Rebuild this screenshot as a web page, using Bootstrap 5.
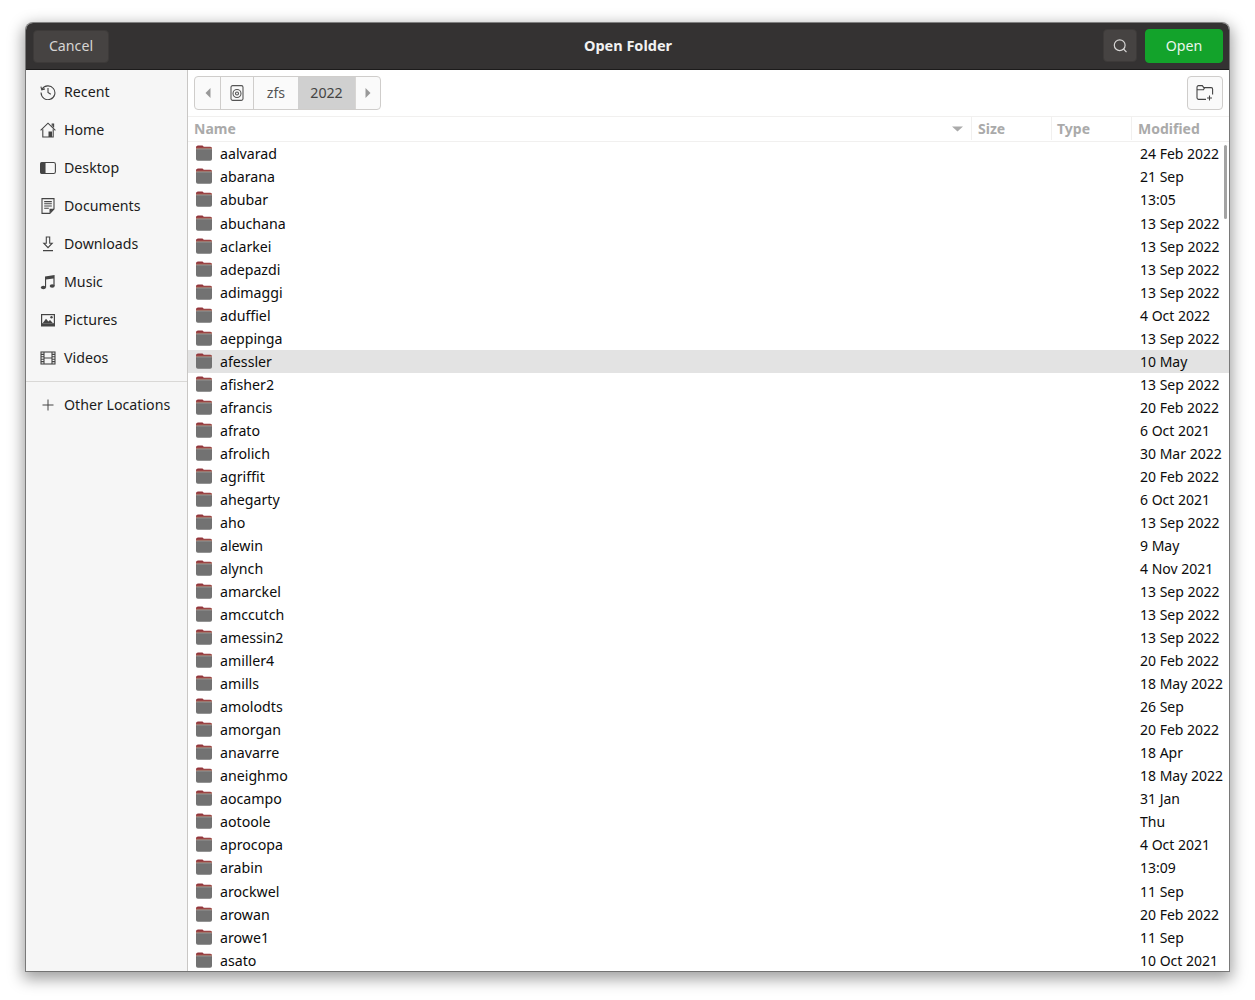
<!DOCTYPE html>
<html lang="en">
<head>
<meta charset="utf-8">
<title>Open Folder</title>
<link href="https://cdn.jsdelivr.net/npm/bootstrap@5.3.0/dist/css/bootstrap.min.css" rel="stylesheet">
<style>
html,body{background:#fff;height:1000px;overflow:hidden}
body{font-family:"Noto Sans","Liberation Sans",sans-serif;font-size:14.2px;color:#0c0c0c;padding:23px 26px 0}
.dlg{width:1203px;height:948px;border-radius:7px 7px 0 0;overflow:hidden;box-shadow:0 0 0 1px rgba(90,90,90,.7),0 5px 15px 3px rgba(0,0,0,.38);background:#fff}
.hdr{height:47px;background:#343232;border-bottom:1px solid #1c1b1b;display:grid;grid-template-columns:1fr auto 1fr;align-items:center;padding:0 6px 0 7px;flex:none}
.hdr-title{color:#f2f2f2;font-weight:700;font-size:14.5px}
.tbtn{background:#464342;color:#d6d5d4;border:1px solid #3d3a39;border-radius:4px;height:33px;padding:0;font-size:14.2px;display:flex;align-items:center;justify-content:center}
.tbtn-cancel{width:76px}
.tbtn-search{width:34px}
.tbtn-open{width:78px;height:34px;background:#13a32b;border-color:#13a32b;color:#e9f6eb}
.bodyrow{flex:1;min-height:0}
.side{width:162px;flex:none;background:#f6f6f6;border-right:1px solid #c9c7c5;color:#1c1c1c;padding-top:3px}
.sitem{height:38px;padding-left:14px;gap:8px}
.sitem svg{width:16px;height:16px;flex:none}
.sdiv{border-top:1px solid #d9d8d6;margin-top:4px;padding-top:4px}
.main{min-width:0;background:#fff}
.tools{height:47px;padding:6px 6px 0 6px;flex:none;border-bottom:1px solid #f1f0ef}
.crumbs{height:34px;border:1px solid #cfcdcb;border-radius:4px;background:#fafafa;color:#555;overflow:hidden}
.crumb{height:100%;display:flex;align-items:center;justify-content:center;border-right:1px solid #cfcdcb}
.crumb:last-child{border-right:0}
.c-prev{width:26px}.c-disk{width:33px}.c-zfs{width:44px;border-right:0}.c-yr{width:58px;background:#d0d0d0;color:#444;border-right:1px solid #d8d6d4}.c-next{width:24px}
.newf{width:36px;height:34px;border:1px solid #cfcdcb;border-radius:4px;background:#fafafa}
.cols{height:25px;padding-bottom:1px;border-bottom:1px solid #f1f0ef;color:#aaa;font-weight:700;font-size:14px;flex:none}
.col-name{width:784px;padding-left:6px;border-right:1px solid #f1f0ef;height:100%}
.col-size{width:80px;padding-left:6px;border-right:1px solid #f1f0ef;height:100%}
.col-type{width:80px;padding-left:5px;border-right:1px solid #f1f0ef;height:100%}
.col-mod{padding-left:6px;height:100%}
.lst{flex:1;min-height:0;overflow:hidden;position:relative}
.frow{height:23px;padding-left:8px}
.frow-tall{height:24px;padding-bottom:1px}
.frow-sel{background:#e3e3e3}
.fico{width:16px;height:16px;flex:none;margin-right:8px;position:relative;top:-1px}
.fname{flex:1;min-width:0}
.fdate{width:89px;flex:none;white-space:nowrap;font-size:14px}
.sbar{position:absolute;right:2px;top:3px;width:3px;height:74px;border-radius:2px;background:#a3a3a3}
</style>
</head>
<body>
<svg width="0" height="0" class="position-absolute">
<symbol id="fo" viewBox="0 0 16 16">
<path d="M2 .6h4.500l1.300 1.100H14.300C15.300 1.700 16 2.500 16 3.500V6H0V2.500C0 1.400.9.600 2 .6z" fill="#93363c"/>
<rect x="0" y="2.800" width="16" height="1" fill="#c2826b"/>
<rect x="0" y="3.700" width="16" height="12.100" rx="1.800" fill="#727272"/>
<rect x="0" y="3.700" width="16" height="1" fill="#8a8a8a"/>
</symbol>
</svg>
<div class="dlg d-flex flex-column">
  <div class="hdr">
    <div class="d-flex"><button class="tbtn tbtn-cancel" type="button">Cancel</button></div>
    <div class="hdr-title">Open Folder</div>
    <div class="d-flex justify-content-end gap-2">
      <button class="tbtn tbtn-search" type="button" aria-label="Search"><svg width="16" height="16" viewBox="0 0 16 16" fill="none" stroke="#d6d5d4" stroke-width="1.2"><circle cx="7.700" cy="7.200" r="5.400"/><path d="M11.500 11l3 3.200"/></svg></button>
      <button class="tbtn tbtn-open" type="button">Open</button>
    </div>
  </div>
  <div class="d-flex bodyrow">
    <div class="side">
      <div class="sitem d-flex align-items-center"><svg viewBox="0 0 16 16" fill="none" stroke="#444" stroke-width="1.1"><path d="M2.100 5.200A6.900 6.900 0 1 1 1.100 8.600"/><path d="M.9 2.600l.9 3.200 3.100-.9" /><path d="M8 4v4.400l2.800 1.800"/></svg><span>Recent</span></div>
      <div class="sitem d-flex align-items-center"><svg viewBox="0 0 16 16" fill="none" stroke="#444" stroke-width="1.1"><path d="M.6 8.400L8 1.200l7.400 7.200"/><path d="M12.200 4.600V2h1.400v3.600" /><path d="M2.800 7.200v7.800h10.400V7.200"/><rect x="8.500" y="9.500" width="3.500" height="5.500" fill="#444" stroke="none"/></svg><span>Home</span></div>
      <div class="sitem d-flex align-items-center"><svg viewBox="0 0 16 16" fill="none" stroke="#444" stroke-width="1.1"><rect x=".6" y="2.500" width="14.800" height="11" rx="1.800"/><path d="M.6 4.300c0-1 .8-1.800 1.800-1.800H5v11H2.400c-1 0-1.800-.8-1.800-1.800z" fill="#444"/></svg><span>Desktop</span></div>
      <div class="sitem d-flex align-items-center"><svg viewBox="0 0 16 16" fill="none" stroke="#444" stroke-width="1.100"><path d="M2 .6h12v10.400L9.800 15.400H2z"/><path d="M4.200 3.600h7.600M4.200 5.800h7.600M4.200 8h7.600M4.200 10.200h4.600"/><path d="M9.500 15v-4.200H14z" fill="#444" stroke="none"/></svg><span>Documents</span></div>
      <div class="sitem d-flex align-items-center"><svg viewBox="0 0 16 16" fill="none" stroke="#444" stroke-width="1.100"><path d="M6.300 1h3.400v6.200h2.500L8 11.600 3.800 7.200h2.500z"/><path d="M3 14.600h10"/></svg><span>Downloads</span></div>
      <div class="sitem d-flex align-items-center"><svg viewBox="0 0 16 16" fill="#444"><ellipse cx="3.400" cy="13.500" rx="2.500" ry="1.800"/><ellipse cx="12.200" cy="12" rx="2.500" ry="1.800"/><path d="M5 13.500V2.400L14.600 1v11h-1.200V4.400L6.100 5.400v8.100z"/></svg><span>Music</span></div>
      <div class="sitem d-flex align-items-center"><svg viewBox="0 0 16 16"><rect x="1" y="2" width="14" height="12.500" fill="#444"/><rect x="2.200" y="3.200" width="11.600" height="8" fill="#f6f6f6"/><path d="M2.800 11l3.200-4.200 2.400 2.600 1.600-1.400 2.800 3z" fill="#444"/><circle cx="11.500" cy="5.200" r="1.200" fill="#444"/></svg><span>Pictures</span></div>
      <div class="sitem d-flex align-items-center"><svg viewBox="0 0 16 16" fill="none" stroke="#444" stroke-width="1.100"><rect x="1" y="2" width="14" height="12"/><path d="M4 2v12M12 2v12M4 8h8"/><path d="M1 4.400h3M1 6.800h3M1 9.200h3M1 11.600h3M12 4.400h3M12 6.800h3M12 9.200h3M12 11.600h3"/></svg><span>Videos</span></div>
      <div class="sdiv"><div class="sitem d-flex align-items-center"><svg viewBox="0 0 16 16" fill="none" stroke="#444" stroke-width="1"><path d="M8 2.500v11M2.500 8h11"/></svg><span>Other Locations</span></div></div>
    </div>
    <div class="main flex-grow-1 d-flex flex-column">
      <div class="tools d-flex justify-content-between align-items-start">
        <div class="crumbs d-flex">
          <div class="crumb c-prev"><svg width="6" height="10" viewBox="0 0 6 10"><path d="M5.500 0v10L.5 5z" fill="#999"/></svg></div>
          <div class="crumb c-disk"><svg width="14" height="16" viewBox="0 0 14 16" fill="none" stroke="#555" stroke-width="1.100"><rect x="1" y=".6" width="12" height="14.800" rx="1.600"/><circle cx="7" cy="8.500" r="4"/><circle cx="7" cy="8.500" r="1.500"/></svg></div>
          <div class="crumb c-zfs">zfs</div>
          <div class="crumb c-yr">2022</div>
          <div class="crumb c-next"><svg width="6" height="10" viewBox="0 0 6 10"><path d="M.5 0v10l5-5z" fill="#999"/></svg></div>
        </div>
        <div class="newf d-flex align-items-center justify-content-center"><svg width="18" height="16" viewBox="0 0 18 16" fill="none" stroke="#444" stroke-width="1.100"><path d="M10 14.400H2.500A1.600 1.600 0 0 1 1 12.800V2.200C1 1.300 1.700.6 2.500.6h3.800l1.500 2h7.400c.8 0 1.400.6 1.400 1.400v5.400"/><path d="M1 4.800h6.500l1.200-2.200"/><path d="M13.500 10.500v5M11 13h5"/></svg></div>
      </div>
      <div class="cols d-flex align-items-center">
        <div class="col-name d-flex align-items-center justify-content-between"><span>Name</span><svg class="me-2" width="11" height="6" viewBox="0 0 11 6"><path d="M0 .5h11L5.500 5.500z" fill="#aaa"/></svg></div>
        <div class="col-size d-flex align-items-center">Size</div>
        <div class="col-type d-flex align-items-center">Type</div>
        <div class="col-mod d-flex align-items-center">Modified</div>
      </div>
      <div class="lst">
        <div class="sbar"></div>
        <div class="frow d-flex align-items-center"><svg class="fico"><use href="#fo"/></svg><span class="fname">aalvarad</span><span class="fdate">24 Feb 2022</span></div>
        <div class="frow d-flex align-items-center"><svg class="fico"><use href="#fo"/></svg><span class="fname">abarana</span><span class="fdate">21 Sep</span></div>
        <div class="frow frow-tall d-flex align-items-center"><svg class="fico"><use href="#fo"/></svg><span class="fname">abubar</span><span class="fdate">13:05</span></div>
        <div class="frow d-flex align-items-center"><svg class="fico"><use href="#fo"/></svg><span class="fname">abuchana</span><span class="fdate">13 Sep 2022</span></div>
        <div class="frow d-flex align-items-center"><svg class="fico"><use href="#fo"/></svg><span class="fname">aclarkei</span><span class="fdate">13 Sep 2022</span></div>
        <div class="frow d-flex align-items-center"><svg class="fico"><use href="#fo"/></svg><span class="fname">adepazdi</span><span class="fdate">13 Sep 2022</span></div>
        <div class="frow d-flex align-items-center"><svg class="fico"><use href="#fo"/></svg><span class="fname">adimaggi</span><span class="fdate">13 Sep 2022</span></div>
        <div class="frow d-flex align-items-center"><svg class="fico"><use href="#fo"/></svg><span class="fname">aduffiel</span><span class="fdate">4 Oct 2022</span></div>
        <div class="frow d-flex align-items-center"><svg class="fico"><use href="#fo"/></svg><span class="fname">aeppinga</span><span class="fdate">13 Sep 2022</span></div>
        <div class="frow frow-sel d-flex align-items-center"><svg class="fico"><use href="#fo"/></svg><span class="fname">afessler</span><span class="fdate">10 May</span></div>
        <div class="frow d-flex align-items-center"><svg class="fico"><use href="#fo"/></svg><span class="fname">afisher2</span><span class="fdate">13 Sep 2022</span></div>
        <div class="frow d-flex align-items-center"><svg class="fico"><use href="#fo"/></svg><span class="fname">afrancis</span><span class="fdate">20 Feb 2022</span></div>
        <div class="frow d-flex align-items-center"><svg class="fico"><use href="#fo"/></svg><span class="fname">afrato</span><span class="fdate">6 Oct 2021</span></div>
        <div class="frow d-flex align-items-center"><svg class="fico"><use href="#fo"/></svg><span class="fname">afrolich</span><span class="fdate">30 Mar 2022</span></div>
        <div class="frow d-flex align-items-center"><svg class="fico"><use href="#fo"/></svg><span class="fname">agriffit</span><span class="fdate">20 Feb 2022</span></div>
        <div class="frow d-flex align-items-center"><svg class="fico"><use href="#fo"/></svg><span class="fname">ahegarty</span><span class="fdate">6 Oct 2021</span></div>
        <div class="frow d-flex align-items-center"><svg class="fico"><use href="#fo"/></svg><span class="fname">aho</span><span class="fdate">13 Sep 2022</span></div>
        <div class="frow d-flex align-items-center"><svg class="fico"><use href="#fo"/></svg><span class="fname">alewin</span><span class="fdate">9 May</span></div>
        <div class="frow d-flex align-items-center"><svg class="fico"><use href="#fo"/></svg><span class="fname">alynch</span><span class="fdate">4 Nov 2021</span></div>
        <div class="frow d-flex align-items-center"><svg class="fico"><use href="#fo"/></svg><span class="fname">amarckel</span><span class="fdate">13 Sep 2022</span></div>
        <div class="frow d-flex align-items-center"><svg class="fico"><use href="#fo"/></svg><span class="fname">amccutch</span><span class="fdate">13 Sep 2022</span></div>
        <div class="frow d-flex align-items-center"><svg class="fico"><use href="#fo"/></svg><span class="fname">amessin2</span><span class="fdate">13 Sep 2022</span></div>
        <div class="frow d-flex align-items-center"><svg class="fico"><use href="#fo"/></svg><span class="fname">amiller4</span><span class="fdate">20 Feb 2022</span></div>
        <div class="frow d-flex align-items-center"><svg class="fico"><use href="#fo"/></svg><span class="fname">amills</span><span class="fdate">18 May 2022</span></div>
        <div class="frow d-flex align-items-center"><svg class="fico"><use href="#fo"/></svg><span class="fname">amolodts</span><span class="fdate">26 Sep</span></div>
        <div class="frow d-flex align-items-center"><svg class="fico"><use href="#fo"/></svg><span class="fname">amorgan</span><span class="fdate">20 Feb 2022</span></div>
        <div class="frow d-flex align-items-center"><svg class="fico"><use href="#fo"/></svg><span class="fname">anavarre</span><span class="fdate">18 Apr</span></div>
        <div class="frow d-flex align-items-center"><svg class="fico"><use href="#fo"/></svg><span class="fname">aneighmo</span><span class="fdate">18 May 2022</span></div>
        <div class="frow d-flex align-items-center"><svg class="fico"><use href="#fo"/></svg><span class="fname">aocampo</span><span class="fdate">31 Jan</span></div>
        <div class="frow d-flex align-items-center"><svg class="fico"><use href="#fo"/></svg><span class="fname">aotoole</span><span class="fdate">Thu</span></div>
        <div class="frow d-flex align-items-center"><svg class="fico"><use href="#fo"/></svg><span class="fname">aprocopa</span><span class="fdate">4 Oct 2021</span></div>
        <div class="frow frow-tall d-flex align-items-center"><svg class="fico"><use href="#fo"/></svg><span class="fname">arabin</span><span class="fdate">13:09</span></div>
        <div class="frow d-flex align-items-center"><svg class="fico"><use href="#fo"/></svg><span class="fname">arockwel</span><span class="fdate">11 Sep</span></div>
        <div class="frow d-flex align-items-center"><svg class="fico"><use href="#fo"/></svg><span class="fname">arowan</span><span class="fdate">20 Feb 2022</span></div>
        <div class="frow d-flex align-items-center"><svg class="fico"><use href="#fo"/></svg><span class="fname">arowe1</span><span class="fdate">11 Sep</span></div>
        <div class="frow d-flex align-items-center"><svg class="fico"><use href="#fo"/></svg><span class="fname">asato</span><span class="fdate">10 Oct 2021</span></div>
      </div>
    </div>
  </div>
</div>
</body>
</html>
